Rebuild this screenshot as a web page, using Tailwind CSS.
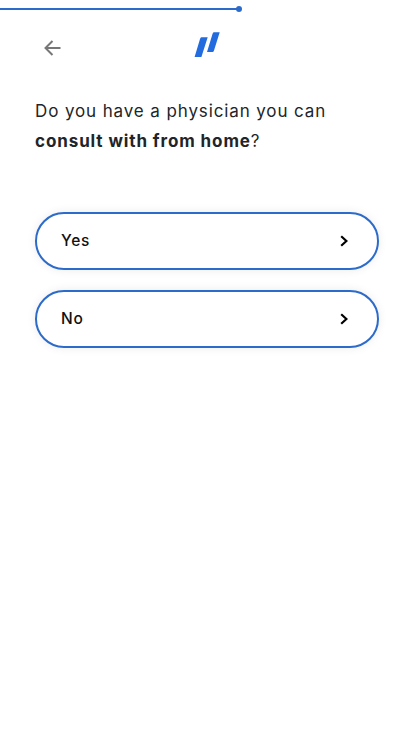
<!DOCTYPE html>
<html lang="en">
<head>
  <meta charset="UTF-8" />
  <meta name="viewport" content="width=device-width, initial-scale=1.0" />
  <title>Physician</title>
  <script src="https://cdn.jsdelivr.net/npm/@tailwindcss/browser@4"></script>
</head>
<body class="bg-white text-[#212529] font-['Inter',sans-serif] min-h-screen overflow-x-hidden">
  <!-- Progress -->
  <div class="h-[18px] flex items-center">
    <div class="w-[237px] h-[2px] bg-[#2c6bca]"></div>
    <div class="size-[6px] -ml-px rounded-full bg-[#2c6bca]"></div>
  </div>

  <!-- Header -->
  <header class="h-[72px] px-11 grid grid-cols-3">
    <button class="w-4 h-4 mt-[22px]" aria-label="Back">
      <svg class="block" width="17" height="16" viewBox="0 0 17 16" fill="none" stroke="#777" stroke-width="2">
        <path d="M8.5 1 1.5 8l7 7M1.5 8H16.5" />
      </svg>
    </button>
    <svg class="mt-[14px] justify-self-center" width="26" height="26" viewBox="0 0 26 26" fill="#226ce0">
      <path d="M7.3 5.3H13.7L7.4 25H.6L6 7Q6.5 5.3 7.3 5.3Z" />
      <path d="M19.7.3H25.7L20 18.4Q19.5 20 18.5 20H13L18.5 2Q19 .3 19.7.3Z" />
    </svg>
  </header>

  <main class="px-[35px]">
    <h1 class="pt-[6px] text-[17px] leading-[30px] whitespace-nowrap">
      <span class="block tracking-[0.88px]">Do you have a physician you can</span>
      <span class="block"><b class="font-bold tracking-[0.9px]">consult with from home</b>?</span>
    </h1>

    <!-- Answers -->
    <div class="mt-14 w-[344px] flex flex-col gap-5">
      <button class="h-[58px] pl-6 pr-[29px] flex items-center justify-between border-2 border-[#2c6bca] rounded-full bg-white shadow-[0_0_10px_rgba(0,0,0,0.08)]">
        <span class="text-[15.5px] font-medium tracking-[0.7px] text-[#111]">Yes</span>
        <svg width="8" height="12" viewBox="0 0 8 12" fill="none" stroke="#000" stroke-width="2.2">
          <path d="M1.2 1.2 6.4 6l-5.2 4.8" />
        </svg>
      </button>
      <button class="h-[58px] pl-6 pr-[29px] flex items-center justify-between border-2 border-[#2c6bca] rounded-full bg-white shadow-[0_0_10px_rgba(0,0,0,0.08)]">
        <span class="text-[15.5px] font-medium tracking-[0.9px] text-[#111]">No</span>
        <svg width="8" height="12" viewBox="0 0 8 12" fill="none" stroke="#000" stroke-width="2.2">
          <path d="M1.2 1.2 6.4 6l-5.2 4.8" />
        </svg>
      </button>
    </div>
  </main>
</body>
</html>
